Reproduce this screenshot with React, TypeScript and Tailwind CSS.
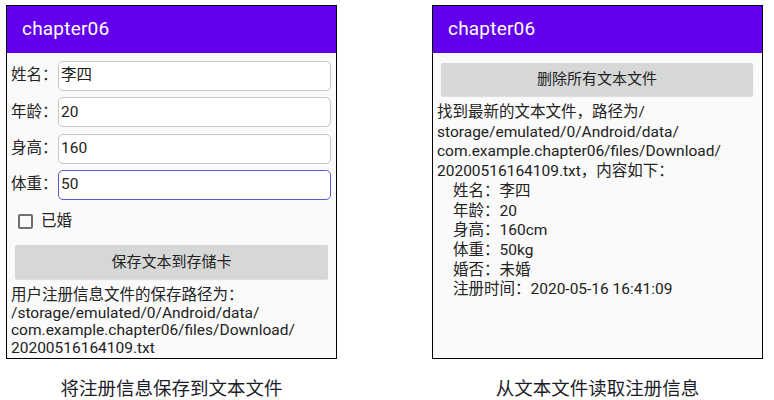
import React from 'react';

const sans = "font-['Roboto','Noto_Sans_CJK_SC',sans-serif]";

const fields = [
  { label: '姓名：', value: '李四' },
  { label: '年龄：', value: '20' },
  { label: '身高：', value: '160' },
  { label: '体重：', value: '50', focused: true },
];

const AppBar = () => (
  <div className="h-[47px] bg-[#6200ee] flex items-center pl-[15px]">
    <span className="text-white text-[19px] tracking-[0.2px]">chapter06</span>
  </div>
);

const Phone = ({ children }: { children: React.ReactNode }) => (
  <div className={`w-[331px] h-[356px] border border-black bg-[#fafafa] flex flex-col ${sans}`}>
    <AppBar />
    {children}
  </div>
);

const Caption = ({ text }: { text: string }) => (
  <div className="mt-[19px] text-[18.5px] leading-[22px] text-[#1c1c28] font-['Liberation_Serif','Noto_Sans_CJK_SC',serif]">
    {text}
  </div>
);

const SaveScreen = () => (
  <Phone>
    <div className="flex flex-col gap-[6.3px] pt-[8px] pl-[4px] pr-[5px]">
      {fields.map((f) => (
        <div key={f.label} className="flex items-center h-[30px]">
          <span className="w-[47px] shrink-0 whitespace-nowrap text-[15.5px] text-[#222]">{f.label}</span>
          <div
            className={`flex-1 h-full rounded-[5px] bg-white flex items-center pl-[2px] text-[15.5px] text-[#222] ${
              f.focused ? 'border-[1.5px] border-[#5a5ad2]' : 'border border-[#c6c6c6]'
            }`}
          >
            {f.value}
          </div>
        </div>
      ))}
    </div>
    <div className="flex items-center h-[30px] mt-[7px] pl-[11px]">
      <span className="w-[15px] h-[15px] rounded-[2px] border-2 border-[#6f6f6f]" />
      <span className="ml-[8px] text-[15.5px] text-[#222]">已婚</span>
    </div>
    <div className="mx-[8px] mt-[8px] h-[34px] bg-[#d6d7d7] rounded-[2px] shadow-[0_1px_1px_rgba(0,0,0,0.12)] flex items-center justify-center text-[15px] text-[#222]">
      保存文本到存储卡
    </div>
    <div className="mt-[8px] pl-[4px] text-[15.5px] leading-[17.7px] text-[#222]">
      <div>用户注册信息文件的保存路径为：</div>
      <div>/storage/emulated/0/Android/data/</div>
      <div>com.example.chapter06/files/Download/</div>
      <div>20200516164109.txt</div>
    </div>
  </Phone>
);

const details = [
  '姓名：李四',
  '年龄：20',
  '身高：160cm',
  '体重：50kg',
  '婚否：未婚',
  '注册时间：2020-05-16 16:41:09',
];

const ReadScreen = () => (
  <Phone>
    <div className="ml-[8px] mr-[9px] mt-[10px] h-[33px] bg-[#d6d7d7] rounded-[2px] shadow-[0_1px_1px_rgba(0,0,0,0.12)] flex items-center justify-center text-[15px] text-[#222]">
      删除所有文本文件
    </div>
    <div className="mt-[7px] pl-[4px] text-[15.5px] leading-[19.7px] text-[#222]">
      <div>找到最新的文本文件，路径为/</div>
      <div>storage/emulated/0/Android/data/</div>
      <div>com.example.chapter06/files/Download/</div>
      <div>20200516164109.txt，内容如下：</div>
      {details.map((d) => (
        <div key={d} className="pl-[16px]">{d}</div>
      ))}
    </div>
  </Phone>
);

export default function App() {
  return (
    <div className="w-[774px] h-[400px] bg-white flex pl-[6px] pt-[5px] gap-[95px]">
      <div className="flex flex-col items-center">
        <SaveScreen />
        <Caption text="将注册信息保存到文本文件" />
      </div>
      <div className="flex flex-col items-center">
        <ReadScreen />
        <Caption text="从文本文件读取注册信息" />
      </div>
    </div>
  );
}
